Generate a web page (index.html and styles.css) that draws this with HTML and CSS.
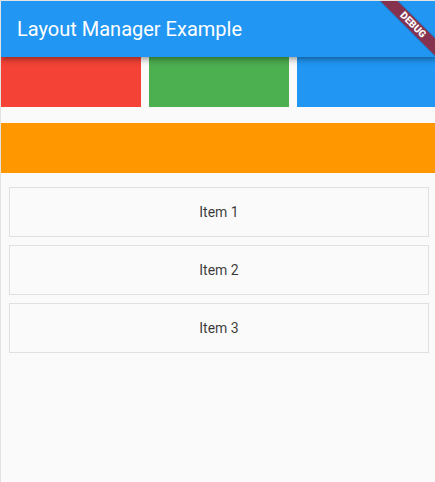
FILE: index.html
```html
<!DOCTYPE html>
<html>
<head>
<meta charset="utf-8">
<link rel="stylesheet" href="styles.css">
</head>
<body>
<div class="frame">
  <div class="app">
    <header class="appbar">
      <h1 class="title">Layout Manager Example</h1>
    </header>
    <div class="boxes">
      <div class="box red"></div>
      <div class="box green"></div>
      <div class="box blue"></div>
    </div>
    <div class="banner-orange"></div>
    <div class="list">
      <div class="item">Item 1</div>
      <div class="item">Item 2</div>
      <div class="item">Item 3</div>
    </div>
    <div class="debug"><span>DEBUG</span></div>
  </div>
</div>
</body>
</html>
```

FILE: styles.css
```css
html, body {
  margin: 0;
  padding: 0;
  overflow: hidden;
  background: #fafafa;
}
.frame {
  width: 437px;
  height: 482px;
  border-top: 1px solid #e3e3e3;
  border-left: 1px solid #e3e3e3;
  box-sizing: border-box;
  overflow: hidden;
}
.app {
  position: relative;
  width: 436px;
  height: 481px;
  background: #fafafa;
  font-family: Roboto, "Noto Sans", sans-serif;
  overflow: hidden;
}
.appbar {
  position: relative;
  z-index: 2;
  height: 56px;
  background: #2196f3;
  display: flex;
  align-items: center;
  padding-left: 16px;
  box-shadow: 0 2px 4px -1px rgba(0,0,0,.2), 0 4px 5px 0 rgba(0,0,0,.14), 0 1px 10px 0 rgba(0,0,0,.12);
}
.title {
  margin: 0;
  color: #fff;
  font-size: 20px;
  font-weight: 400;
  line-height: 1;
}
.boxes {
  display: flex;
  gap: 8px;
  height: 50px;
}
.box { width: 140px; flex: none; }
.red { background: #f44336; }
.green { background: #4caf50; }
.blue { background: #2196f3; }
.banner-orange {
  margin-top: 16px;
  height: 50px;
  background: #ff9800;
}
.list {
  padding: 14px 8px 0;
  display: flex;
  flex-direction: column;
  gap: 8px;
}
.item {
  height: 50px;
  box-sizing: border-box;
  border: 1px solid #e0e0e0;
  display: flex;
  align-items: center;
  justify-content: center;
  font-size: 14px;
  color: rgba(0,0,0,.78);
}
.debug {
  position: absolute;
  z-index: 3;
  left: 371.96px;
  top: 18.04px;
  width: 80px;
  height: 12px;
  transform: rotate(45deg);
  background: #86324f;
  box-shadow: 0 0 2px rgba(0,0,0,.35);
  display: flex;
  align-items: center;
  justify-content: center;
}
.debug span {
  color: #fff;
  font-family: Roboto, sans-serif;
  font-weight: 900;
  font-size: 10px;
  line-height: 1;
}
```
